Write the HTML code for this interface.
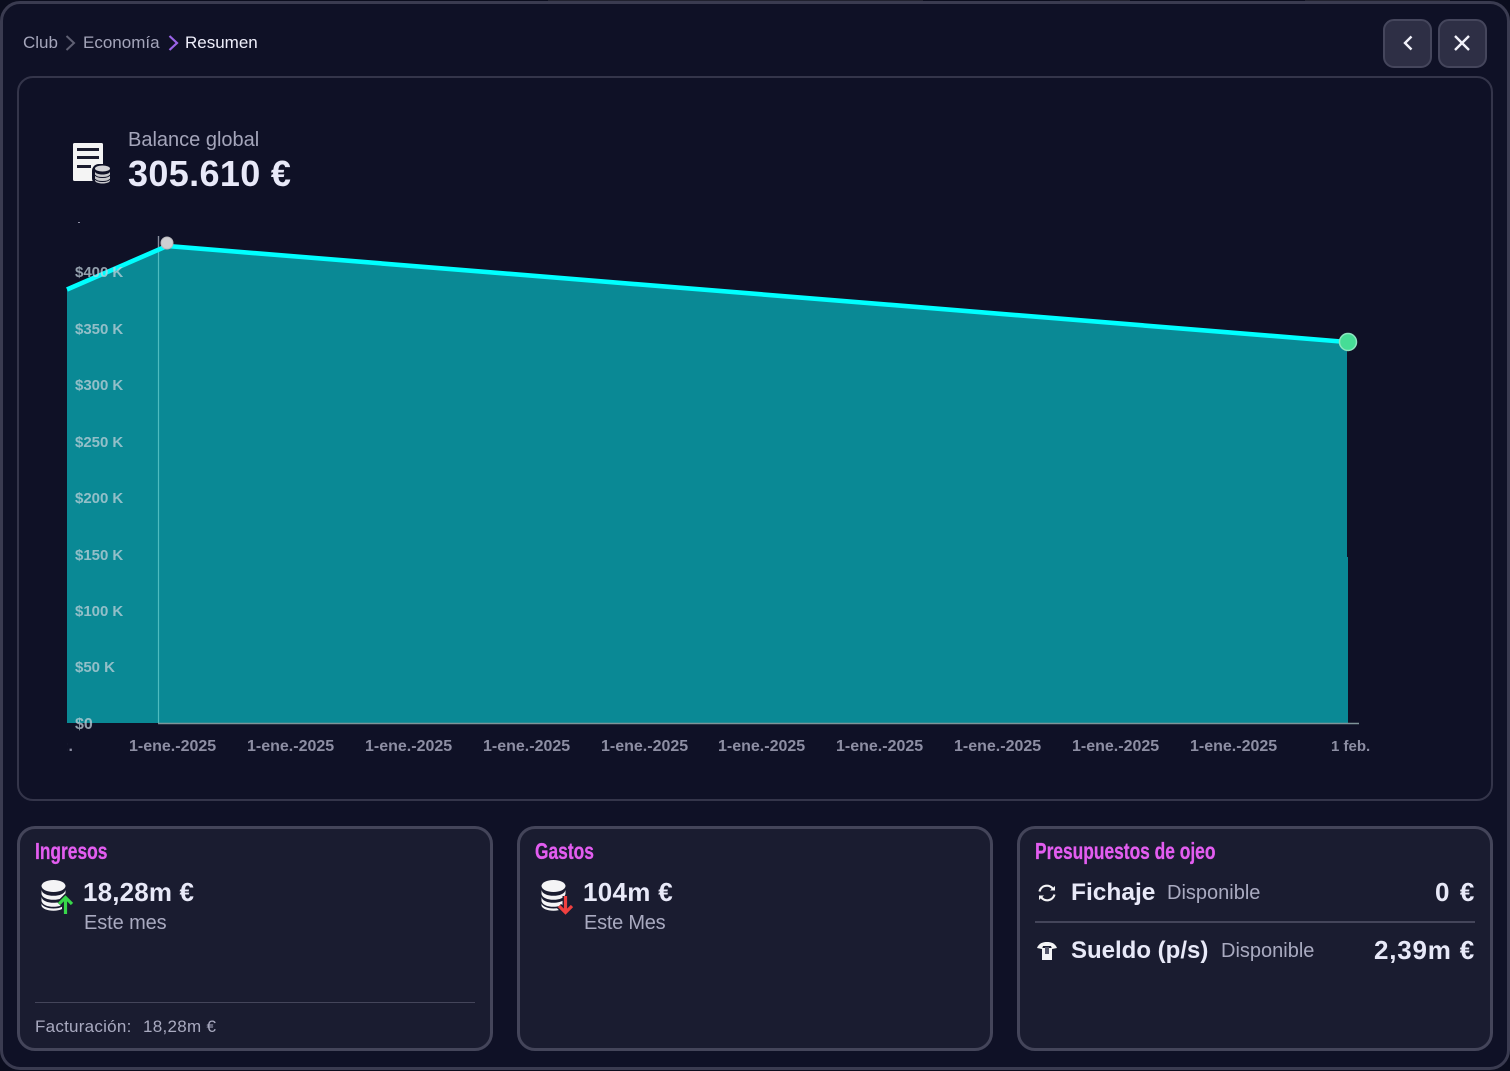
<!DOCTYPE html>
<html lang="es">
<head>
<meta charset="utf-8">
<title>Resumen</title>
<style>
html,body{margin:0;padding:0;width:1510px;height:1071px;overflow:hidden;background:#0b0d1e;}
body{position:relative;font-family:"Liberation Sans",sans-serif;}
.t{position:absolute;white-space:nowrap;line-height:1;}
.box{position:absolute;box-sizing:border-box;}
.h{color:#e35df0;font-weight:700;font-size:23px;transform-origin:0 0;transform:scaleX(.755);-webkit-text-stroke:.3px #e35df0;}
.y{color:#c2d2db;font-size:15px;font-weight:700;opacity:.74;letter-spacing:-.02px;}
.x{color:#8d8ea3;font-size:16px;font-weight:700;}
.big{color:#e8e9f8;font-weight:700;}
.sub{color:#a9aac0;}
svg{position:absolute;overflow:visible;}
</style>
</head>
<body>
<div class="box" style="left:0;top:1px;width:1510px;height:1069px;background:#0f1126;border:3px solid #3a3b50;border-radius:20px;"></div>
<div class="box" style="left:548px;top:0;width:375px;height:1px;background:#20212f;"></div>
<div class="box" style="left:1060px;top:0;width:70px;height:1px;background:#20212f;"></div>
<div class="box" style="left:1305px;top:0;width:145px;height:1px;background:#20212f;"></div>

<!-- breadcrumb -->
<div class="t" style="left:23px;top:34px;font-size:17px;color:#a4a5ba;">Club</div>
<svg style="left:65px;top:35px" width="12" height="16"><path d="M1.500 1L9 8L1.500 15" fill="none" stroke="#5f6073" stroke-width="2"/></svg>
<div class="t" style="left:83px;top:34px;font-size:17px;color:#a4a5ba;">Economía</div>
<svg style="left:168px;top:35px" width="12" height="16"><path d="M1.500 1L9 8L1.500 15" fill="none" stroke="#9a63e8" stroke-width="2.200"/></svg>
<div class="t" style="left:185px;top:34px;font-size:17px;color:#eeeefa;">Resumen</div>

<!-- top buttons -->
<div class="box" style="left:1383px;top:19px;width:49px;height:49px;background:#2e2f45;border:2px solid #45465c;border-radius:11px;"></div>
<div class="box" style="left:1438px;top:19px;width:49px;height:49px;background:#2e2f45;border:2px solid #45465c;border-radius:11px;"></div>
<svg style="left:1400px;top:33px" width="16" height="20"><path d="M11.500 3.500L5 10L11.500 16.500" fill="none" stroke="#f2f2fa" stroke-width="2.400"/></svg>
<svg style="left:1453px;top:34px" width="18" height="18"><path d="M2 2L16 16M16 2L2 16" fill="none" stroke="#f2f2fa" stroke-width="2.400"/></svg>

<!-- chart panel -->
<div class="box" style="left:17px;top:76px;width:1476px;height:725px;background:#0f1126;border:2px solid #34354a;border-radius:16px;"></div>

<!-- balance icon -->
<svg style="left:70px;top:140px" width="44" height="46">
<rect x="3" y="3" width="30" height="38" rx="1.500" fill="#f4f4f4"/>
<rect x="7" y="8" width="22" height="3" fill="#1b1c2e"/>
<rect x="7" y="16" width="22" height="3" fill="#1b1c2e"/>
<rect x="7" y="25" width="14" height="3" fill="#1b1c2e"/>
<rect x="22" y="24" width="20" height="21" rx="7" fill="#0f1126"/>
<ellipse cx="32.500" cy="28.500" rx="7.500" ry="3" fill="#d5d5d8"/>
<path d="M25 31.500v9c0 1.700 3.400 3 7.500 3s7.500-1.300 7.500-3v-9c0 1.700-3.400 3-7.500 3s-7.500-1.300-7.500-3z" fill="#c8c8cc"/>
<path d="M25 35c1 1.600 3.800 2.500 7.500 2.500s6.500-.9 7.500-2.500M25 39c1 1.600 3.800 2.500 7.500 2.500s6.500-.9 7.500-2.500" fill="none" stroke="#0f1126" stroke-width="1"/>
</svg>
<div class="t" style="left:128px;top:130px;font-size:20px;color:#a4a5ba;">Balance global</div>
<div class="t big" style="left:128px;top:156px;font-size:36px;letter-spacing:.35px;">305.610 €</div>

<!-- chart -->
<svg style="left:0;top:0" width="1510" height="1071">
<rect x="78" y="222" width="2" height="1" fill="#8d8ea3"/>
<polygon points="67,290 167,245 1347,342 1347,557 1348,557 1348,723 67,723" fill="#0a8995"/>
<line x1="158.500" y1="236" x2="158.500" y2="723" stroke="#4ebcc0" stroke-width="1.200"/>
<line x1="158.500" y1="236" x2="158.500" y2="250" stroke="#8c8d9c" stroke-width="1.200"/>
<line x1="158" y1="723.500" x2="1359" y2="723.500" stroke="#7f9498" stroke-width="1.600"/>
<polyline points="67,289.500 167,246 1347,342" fill="none" stroke="#00ffff" stroke-width="4.600"/>
<circle cx="167" cy="243" r="6" fill="#cfcfd2" stroke="#b9b9bd" stroke-width="1"/>
<circle cx="1348" cy="342" r="8.500" fill="#46dd96" stroke="#8ce6c0" stroke-width="1.500"/>
</svg>

<div class="t y" style="left:75px;top:265px;">$400 K</div>
<div class="t y" style="left:75px;top:322px;">$350 K</div>
<div class="t y" style="left:75px;top:378px;">$300 K</div>
<div class="t y" style="left:75px;top:435px;">$250 K</div>
<div class="t y" style="left:75px;top:491px;">$200 K</div>
<div class="t y" style="left:75px;top:548px;">$150 K</div>
<div class="t y" style="left:75px;top:604px;">$100 K</div>
<div class="t y" style="left:75px;top:660px;">$50 K</div>
<div class="t y" style="left:75px;top:717px;font-size:16px;">$0</div>

<div class="t x" style="left:67px;top:739px;width:6px;overflow:hidden;direction:rtl;">.:</div>
<div class="t x" style="left:129px;top:739px;">1-ene.-2025</div>
<div class="t x" style="left:247px;top:739px;">1-ene.-2025</div>
<div class="t x" style="left:365px;top:739px;">1-ene.-2025</div>
<div class="t x" style="left:483px;top:739px;">1-ene.-2025</div>
<div class="t x" style="left:601px;top:739px;">1-ene.-2025</div>
<div class="t x" style="left:718px;top:739px;">1-ene.-2025</div>
<div class="t x" style="left:836px;top:739px;">1-ene.-2025</div>
<div class="t x" style="left:954px;top:739px;">1-ene.-2025</div>
<div class="t x" style="left:1072px;top:739px;">1-ene.-2025</div>
<div class="t x" style="left:1190px;top:739px;">1-ene.-2025</div>
<div class="t x" style="left:1331px;top:739px;font-size:15px;">1 feb.</div>

<!-- cards -->
<div class="box" style="left:17px;top:826px;width:476px;height:225px;background:#1a1c30;border:3px solid #44455a;border-radius:18px;"></div>
<div class="box" style="left:517px;top:826px;width:476px;height:225px;background:#1a1c30;border:3px solid #44455a;border-radius:18px;"></div>
<div class="box" style="left:1017px;top:826px;width:476px;height:225px;background:#1a1c30;border:3px solid #44455a;border-radius:18px;"></div>

<!-- card 1 -->
<div class="t h" style="left:35px;top:840px;">Ingresos</div>
<svg style="left:38px;top:878px" width="38" height="38">
<ellipse cx="15.500" cy="8" rx="12" ry="6" fill="#f4f4f6"/>
<path d="M3.500 12c.8 3.700 5.800 5.800 12 5.800s11.200-2.100 12-5.800v4c-.8 3.700-5.800 5.800-12 5.800S4.300 19.700 3.500 16z" fill="#f4f4f6"/>
<path d="M3.500 19c.8 3.700 5.800 5.800 12 5.800 4 0 7.500-.9 9.700-2.500v4c-2.200 1.600-5.700 2.500-9.700 2.500-6.200 0-11.200-2.100-12-5.800z" fill="#f4f4f6"/>
<path d="M3.500 25.500c.8 2.700 5.800 5 12 5 3.400 0 6.400-.7 8.500-1.800v2.300c-2.100 1.100-5.100 1.700-8.500 1.700-6.200 0-11.200-2-12-4.800z" fill="#f4f4f6"/>
<path d="M27.500 36V20M21 26l6.500-6.500L34 26" fill="none" stroke="#1a1c30" stroke-width="6"/>
<path d="M27.500 36V20M21 26l6.500-6.500L34 26" fill="none" stroke="#38d84a" stroke-width="3.200"/>
</svg>
<div class="t big" style="left:83px;top:879px;font-size:26px;letter-spacing:.15px;">18,28m €</div>
<div class="t sub" style="left:84px;top:913px;font-size:20px;letter-spacing:-.1px;">Este mes</div>
<div class="box" style="left:35px;top:1002px;width:440px;height:1px;background:#44455a;"></div>
<div class="t sub" style="left:35px;top:1018px;font-size:17px;letter-spacing:.25px;">Facturación:</div>
<div class="t sub" style="left:143px;top:1018px;font-size:17px;letter-spacing:.3px;">18,28m €</div>

<!-- card 2 -->
<div class="t h" style="left:535px;top:840px;">Gastos</div>
<svg style="left:538px;top:878px" width="38" height="38">
<ellipse cx="15.500" cy="8" rx="12" ry="6" fill="#f4f4f6"/>
<path d="M3.500 12c.8 3.700 5.800 5.800 12 5.800s11.200-2.100 12-5.800v4c-.8 3.700-5.800 5.800-12 5.800S4.300 19.700 3.500 16z" fill="#f4f4f6"/>
<path d="M3.500 19c.8 3.700 5.800 5.800 12 5.800 4 0 7.500-.9 9.700-2.500v4c-2.200 1.600-5.700 2.500-9.700 2.500-6.200 0-11.200-2.100-12-5.800z" fill="#f4f4f6"/>
<path d="M3.500 25.500c.8 2.700 5.800 5 12 5 3.400 0 6.400-.7 8.500-1.800v2.300c-2.100 1.100-5.100 1.700-8.500 1.700-6.200 0-11.200-2-12-4.800z" fill="#f4f4f6"/>
<path d="M27.500 18V34M21 28l6.500 6.500L34 28" fill="none" stroke="#1a1c30" stroke-width="6"/>
<path d="M27.500 18V34M21 28l6.500 6.500L34 28" fill="none" stroke="#f04040" stroke-width="3.200"/>
</svg>
<div class="t big" style="left:583px;top:879px;font-size:26px;letter-spacing:.3px;">104m €</div>
<div class="t sub" style="left:584px;top:913px;font-size:20px;letter-spacing:-.25px;">Este Mes</div>

<!-- card 3 -->
<div class="t h" style="left:1035px;top:840px;">Presupuestos de ojeo</div>
<svg style="left:1037px;top:883px" width="20" height="20">
<path d="M2.500 8.500A7.500 7.500 0 0 1 16 6M17.500 11.500A7.500 7.500 0 0 1 4 14" fill="none" stroke="#f4f4f6" stroke-width="2.200"/>
<path d="M13 7.500h5V3zM7 12.500H2V17z" fill="#f4f4f6"/>
</svg>
<div class="t big" style="left:1071px;top:881px;font-size:24.500px;">Fichaje</div>
<div class="t sub" style="left:1167px;top:883px;font-size:20px;">Disponible</div>
<div class="t big" style="right:35px;top:879px;font-size:26px;letter-spacing:.6px;word-spacing:2px;">0 €</div>
<div class="box" style="left:1035px;top:921px;width:440px;height:2px;background:#44455a;"></div>
<svg style="left:1036px;top:941px" width="22" height="20">
<path d="M1 7C3 2 7 1 11 1s8 1 10 6l-5 1-1-3H7L6 8z" fill="#f4f4f6"/>
<path d="M6 7h10v12H6z" fill="#f4f4f6"/>
<rect x="9" y="6" width="4" height="7" fill="#55566a"/>
</svg>
<div class="t big" style="left:1071px;top:939px;font-size:24px;">Sueldo (p/s)</div>
<div class="t sub" style="left:1221px;top:941px;font-size:20px;">Disponible</div>
<div class="t big" style="right:35px;top:937px;font-size:26px;letter-spacing:.8px;">2,39m €</div>
</body>
</html>
